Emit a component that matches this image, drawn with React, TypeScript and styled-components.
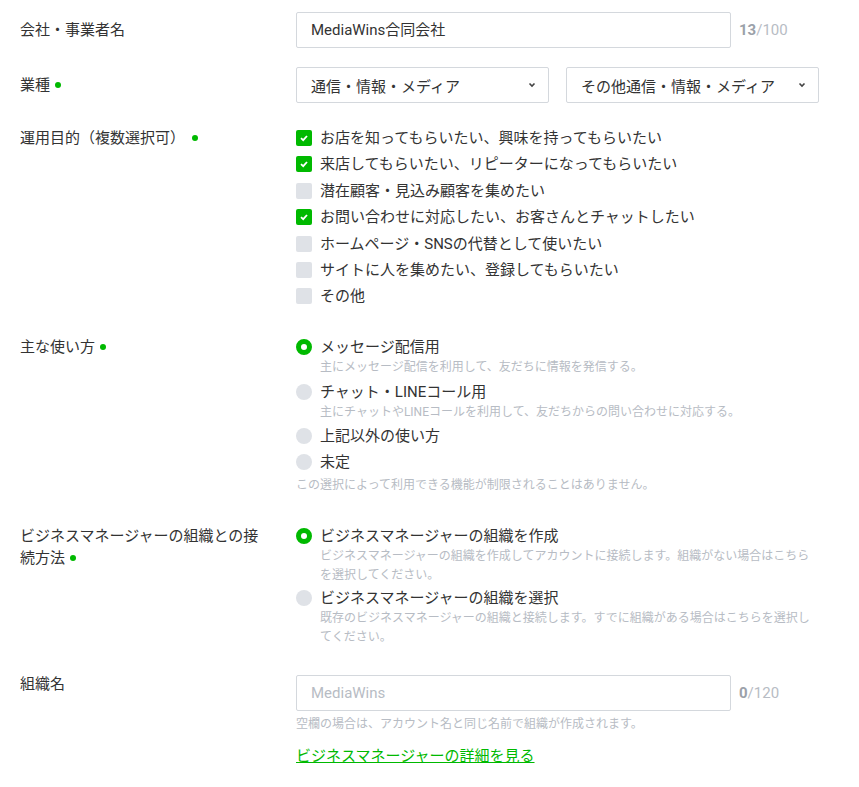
import styled, { createGlobalStyle } from 'styled-components'

const GREEN = '#00b900'

const GlobalStyle = createGlobalStyle`
  body {
    margin: 0;
    background: #fff;
    font-family: Roboto, "Noto Sans CJK JP", sans-serif;
    color: #333;
  }
`

const purposes = [
  { label: 'お店を知ってもらいたい、興味を持ってもらいたい', checked: true },
  { label: '来店してもらいたい、リピーターになってもらいたい', checked: true },
  { label: '潜在顧客・見込み顧客を集めたい', checked: false },
  { label: 'お問い合わせに対応したい、お客さんとチャットしたい', checked: true },
  { label: 'ホームページ・SNSの代替として使いたい', checked: false },
  { label: 'サイトに人を集めたい、登録してもらいたい', checked: false },
  { label: 'その他', checked: false },
]

const usages = [
  { label: 'メッセージ配信用', desc: '主にメッセージ配信を利用して、友だちに情報を発信する。', checked: true },
  {
    label: 'チャット・LINEコール用',
    desc: '主にチャットやLINEコールを利用して、友だちからの問い合わせに対応する。',
    checked: false,
  },
  { label: '上記以外の使い方', checked: false },
  { label: '未定', checked: false },
]

const connections = [
  {
    label: 'ビジネスマネージャーの組織を作成',
    desc: 'ビジネスマネージャーの組織を作成してアカウントに接続します。組織がない場合はこちらを選択してください。',
    checked: true,
  },
  {
    label: 'ビジネスマネージャーの組織を選択',
    desc: '既存のビジネスマネージャーの組織と接続します。すでに組織がある場合はこちらを選択してください。',
    checked: false,
  },
]

export default function App() {
  return (
    <>
      <GlobalStyle />
      <Form>
        <Row $mb={19}>
          <Label $pt={7}>会社・事業者名</Label>
          <Field>
            <InputLine>
              <TextBox>MediaWins合同会社</TextBox>
              <Counter>
                <b>13</b>/100
              </Counter>
            </InputLine>
          </Field>
        </Row>

        <Row $mb={24}>
          <Label $pt={7}>
            業種<Dot />
          </Label>
          <Field>
            <SelectLine>
              <Select>
                <span>通信・情報・メディア</span>
                <Chevron />
              </Select>
              <Select>
                <span>その他通信・情報・メディア</span>
                <Chevron />
              </Select>
            </SelectLine>
          </Field>
        </Row>

        <Row $mb={29}>
          <Label>
            運用目的（複数選択可）<Dot $ml={7} />
          </Label>
          <Field>
            <OptionList $gap={4.4}>
              {purposes.map((p) => (
                <CheckItem key={p.label}>
                  <CheckBox $checked={p.checked}>
                    {p.checked && (
                      <svg width="10" height="10" viewBox="0 0 10 10">
                        <path d="M2 5.2 L4.2 7.2 L8 3" fill="none" stroke="#fff" strokeWidth="1.8" />
                      </svg>
                    )}
                  </CheckBox>
                  {p.label}
                </CheckItem>
              ))}
            </OptionList>
          </Field>
        </Row>

        <Row $mb={30}>
          <Label>
            主な使い方<Dot />
          </Label>
          <Field>
            <OptionList $gap={3.5}>
              {usages.map((u) => (
                <RadioOption key={u.label}>
                  <RadioHead>
                    <Radio $checked={u.checked} />
                    {u.label}
                  </RadioHead>
                  {u.desc && <Desc $indent>{u.desc}</Desc>}
                </RadioOption>
              ))}
            </OptionList>
            <Desc $mt={3}>この選択によって利用できる機能が制限されることはありません。</Desc>
          </Field>
        </Row>

        <Row $mb={28}>
          <Label $lh={22.5}>
            ビジネスマネージャーの組織との接続方法<Dot />
          </Label>
          <Field>
            <OptionList $gap={2}>
              {connections.map((c) => (
                <RadioOption key={c.label}>
                  <RadioHead>
                    <Radio $checked={c.checked} />
                    {c.label}
                  </RadioHead>
                  <Desc $indent>{c.desc}</Desc>
                </RadioOption>
              ))}
            </OptionList>
          </Field>
        </Row>

        <Row $mb={20}>
          <Label $pt={-2}>組織名</Label>
          <Field>
            <InputLine>
              <TextBox $placeholder>MediaWins</TextBox>
              <Counter>
                <b>0</b>/120
              </Counter>
            </InputLine>
            <Desc $mt={4}>空欄の場合は、アカウント名と同じ名前で組織が作成されます。</Desc>
            <DetailLink href="#">ビジネスマネージャーの詳細を見る</DetailLink>
          </Field>
        </Row>
      </Form>
    </>
  )
}

const Form = styled.div`
  display: flex;
  flex-direction: column;
  padding: 12px 20px 0 20px;
`

const Row = styled.div<{ $mb: number }>`
  display: flex;
  align-items: flex-start;
  margin-bottom: ${(p) => p.$mb}px;
`

const Label = styled.div<{ $pt?: number; $lh?: number }>`
  flex: 0 0 248px;
  margin-right: 28px;
  margin-top: ${(p) => p.$pt ?? 0}px;
  font-size: 15px;
  line-height: ${(p) => p.$lh ?? 22}px;
  color: #333;
`

const Dot = styled.span<{ $ml?: number }>`
  display: inline-block;
  width: 6px;
  height: 6px;
  margin-left: ${(p) => p.$ml ?? 5}px;
  border-radius: 50%;
  background: ${GREEN};
  vertical-align: 2px;
`

const Field = styled.div`
  flex: 1;
  min-width: 0;
  display: flex;
  flex-direction: column;
`

const InputLine = styled.div`
  display: flex;
  align-items: center;
`

const TextBox = styled.div<{ $placeholder?: boolean }>`
  box-sizing: border-box;
  width: 435px;
  height: 36px;
  padding: 0 14px;
  border: 1px solid #d4d8dd;
  border-radius: 2px;
  font-size: 15px;
  line-height: 34px;
  color: ${(p) => (p.$placeholder ? '#b7bcc4' : '#333')};
`

const Counter = styled.div`
  margin-left: 8px;
  font-size: 15px;
  color: #b7bcc4;

  b {
    font-weight: 700;
    color: #9ba1a9;
  }
`

const SelectLine = styled.div`
  display: flex;
  gap: 17px;
`

const Select = styled.div`
  box-sizing: border-box;
  width: 253px;
  height: 36px;
  padding: 0 12px 0 14px;
  border: 1px solid #d4d8dd;
  border-radius: 2px;
  display: flex;
  align-items: center;
  justify-content: space-between;
  font-size: 15px;
  color: #333;
`

const ChevronSvg = styled.svg`
  flex: none;
`

function Chevron() {
  return (
    <ChevronSvg width="8" height="6" viewBox="0 0 8 6">
      <path d="M1.5 1.5 L4 4 L6.5 1.5" fill="none" stroke="#444" strokeWidth="1.6" />
    </ChevronSvg>
  )
}

const OptionList = styled.div<{ $gap: number }>`
  display: flex;
  flex-direction: column;
  gap: ${(p) => p.$gap}px;
`

const CheckItem = styled.div`
  display: flex;
  align-items: center;
  gap: 8px;
  font-size: 15px;
  line-height: 22px;
  color: #333;
`

const CheckBox = styled.span<{ $checked: boolean }>`
  flex: none;
  width: 16px;
  height: 16px;
  border-radius: 2px;
  background: ${(p) => (p.$checked ? GREEN : '#dfe2e7')};
  display: flex;
  align-items: center;
  justify-content: center;
`

const RadioOption = styled.div`
  display: flex;
  flex-direction: column;
`

const RadioHead = styled.div`
  display: flex;
  align-items: center;
  gap: 8px;
  font-size: 15px;
  line-height: 22px;
  color: #333;
`

const Radio = styled.span<{ $checked: boolean }>`
  flex: none;
  box-sizing: border-box;
  width: 16px;
  height: 16px;
  border-radius: 50%;
  background: ${(p) => (p.$checked ? '#fff' : '#dfe2e7')};
  border: ${(p) => (p.$checked ? `5px solid ${GREEN}` : 'none')};
`

const Desc = styled.div<{ $indent?: boolean; $mt?: number }>`
  padding-left: ${(p) => (p.$indent ? 24 : 0)}px;
  margin-top: ${(p) => p.$mt ?? 0}px;
  padding-right: 28px;
  font-size: 12px;
  line-height: 19px;
  color: #b7bcc4;
`

const DetailLink = styled.a`
  align-self: flex-start;
  margin-top: 11px;
  font-size: 15px;
  line-height: 22px;
  color: ${GREEN};
  text-decoration: underline;
`
